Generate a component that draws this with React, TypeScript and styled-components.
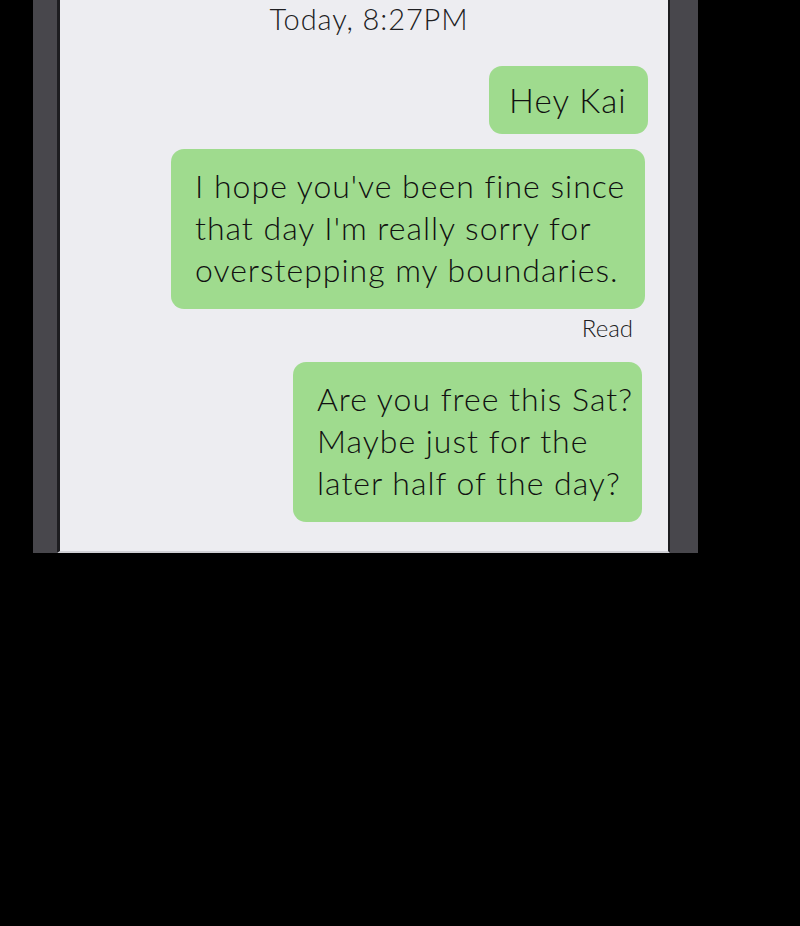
import React from 'react'
import styled, { createGlobalStyle } from 'styled-components'

const GlobalStyle = createGlobalStyle`
  html, body {
    margin: 0;
    padding: 0;
    background: #000;
  }
  body {
    font-family: Lato, "Open Sans", "Liberation Sans", sans-serif;
  }
`

type Msg = {
  lines: string[]
  width: number
  inset: number
  read?: boolean
}

const messages: Msg[] = [
  { lines: ['Hey Kai'], width: 159, inset: 20 },
  {
    lines: [
      "I hope you've been fine since",
      "that day I'm really sorry for",
      'overstepping my boundaries.',
    ],
    width: 474,
    inset: 23,
    read: true,
  },
  {
    lines: ['Are you free this Sat?', 'Maybe just for the', 'later half of the day?'],
    width: 349,
    inset: 26,
  },
]

function App() {
  return (
    <>
      <GlobalStyle />
      <ScPage>
        <ScPhone>
          <ScScreen>
            <ScStamp>Today, 8:27PM</ScStamp>
            <ScThread>
              {messages.map((msg, i) => (
                <ScRow key={i} $inset={msg.inset}>
                  <ScBubble $width={msg.width} $single={msg.lines.length === 1}>
                    {msg.lines.map((line, j) => (
                      <div key={j}>{line}</div>
                    ))}
                  </ScBubble>
                  {msg.read && <ScRead>Read</ScRead>}
                </ScRow>
              ))}
            </ScThread>
          </ScScreen>
        </ScPhone>
      </ScPage>
    </>
  )
}

const ScPage = styled.div`
  width: 800px;
  height: 926px;
  background: #000;
  padding-left: 33px;
  box-sizing: border-box;
`

const ScPhone = styled.div`
  width: 665px;
  height: 553px;
  box-sizing: border-box;
  background: #48474c;
  padding: 0 28px 0 24px;
  display: flex;
`

const ScScreen = styled.div`
  flex: 1;
  background: #ededf1;
  border-left: 3px solid #1d1d20;
  border-right: 2px solid #1d1d20;
  border-bottom: 2px solid #cfcfd4;
  display: flex;
  flex-direction: column;
  overflow: hidden;
`

const ScStamp = styled.div`
  text-align: center;
  font-size: 29px;
  font-weight: 300;
  color: #202022;
  line-height: 40px;
  margin-top: -1px;
  padding-left: 10px;
  letter-spacing: 0.9px;
`

const ScThread = styled.div`
  display: flex;
  flex-direction: column;
  gap: 15px;
  padding-top: 27px;
`

const ScRow = styled.div<{ $inset: number }>`
  display: flex;
  flex-direction: column;
  align-items: flex-end;
  padding-right: ${p => p.$inset}px;
`

const ScBubble = styled.div<{ $width: number; $single: boolean }>`
  width: ${p => p.$width}px;
  box-sizing: border-box;
  background: #9fdb8e;
  border-radius: 13px;
  color: #111;
  font-size: ${p => (p.$single ? 33 : 32)}px;
  font-weight: 300;
  letter-spacing: ${p => (p.$single ? 1.1 : 1)}px;
  line-height: 42px;
  padding: ${p => (p.$single ? '13px 20px' : '16px 20px 18px 24px')};
  text-align: left;
  white-space: nowrap;
`

const ScRead = styled.div`
  font-size: 24px;
  font-weight: 300;
  color: #202022;
  line-height: 30px;
  margin-top: 4px;
  margin-right: 12px;
  margin-bottom: 4px;
`

export default App
